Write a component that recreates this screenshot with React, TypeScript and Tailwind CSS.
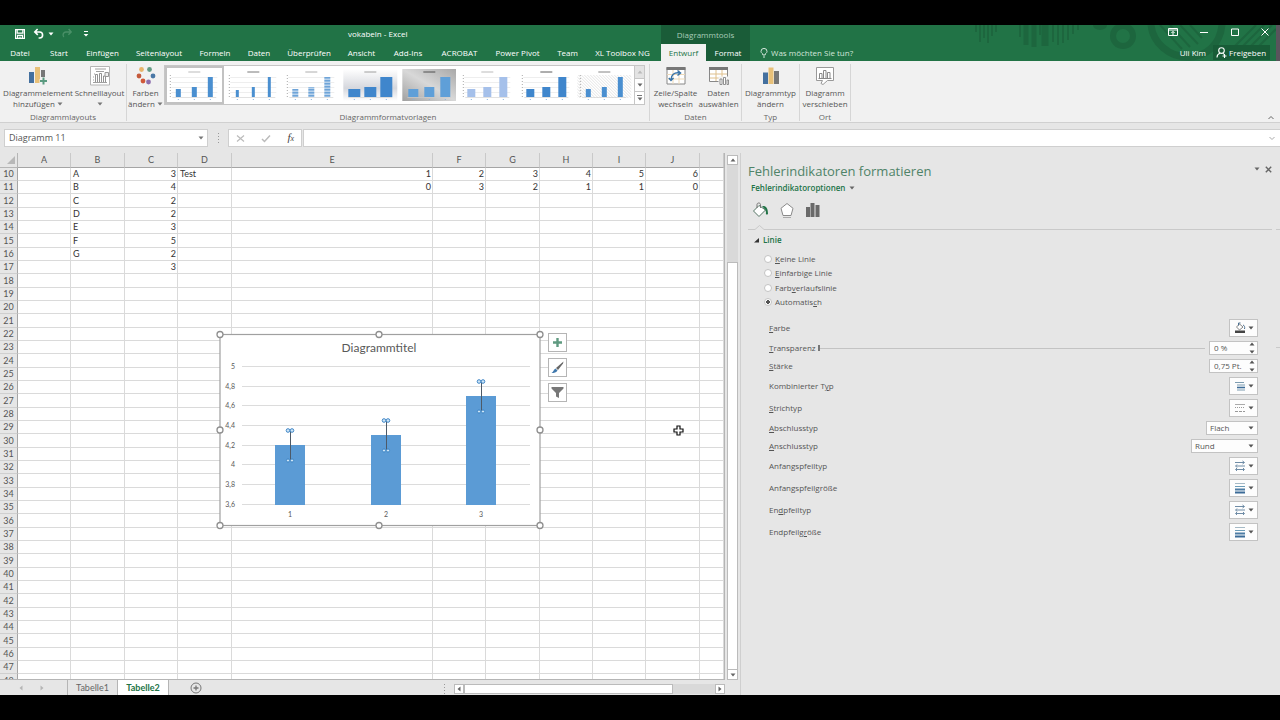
import React from "react";
import clsx from "clsx";

const TABS = [
  { label: "Datei", width: "w-[40px]" },
  { label: "Start", width: "w-[38px]" },
  { label: "Einfügen", width: "w-[49px]" },
  { label: "Seitenlayout", width: "w-[64px]" },
  { label: "Formeln", width: "w-[48px]" },
  { label: "Daten", width: "w-[40px]" },
  { label: "Überprüfen", width: "w-[60px]" },
  { label: "Ansicht", width: "w-[45px]" },
  { label: "Add-Ins", width: "w-[48px]" },
  { label: "ACROBAT", width: "w-[55px]" },
  { label: "Power Pivot", width: "w-[61px]" },
  { label: "Team", width: "w-[39px]" },
  { label: "XL Toolbox NG", width: "w-[74px]" },
];

const COLUMNS = [
  { name: "A", width: "w-[53px]" },
  { name: "B", width: "w-[54px]" },
  { name: "C", width: "w-[53px]" },
  { name: "D", width: "w-[54px]" },
  { name: "E", width: "w-[201px]" },
  { name: "F", width: "w-[53px]" },
  { name: "G", width: "w-[54px]" },
  { name: "H", width: "w-[53px]" },
  { name: "I", width: "w-[53px]" },
  { name: "J", width: "w-[54px]" },
  { name: "", width: "" },
];

const CELLS: Record<number, (string | number)[]> = {
  10: ["", "A", 3, "Test", 1, 2, 3, 4, 5, 6],
  11: ["", "B", 4, "", 0, 3, 2, 1, 1, 0],
  12: ["", "C", 2],
  13: ["", "D", 2],
  14: ["", "E", 3],
  15: ["", "F", 5],
  16: ["", "G", 2],
  17: ["", "", 3],
};

const ROWS = Array.from({ length: 39 }, (_, i) => i + 10);

type IconProps = { className?: string };

const Caret = ({ className }: IconProps) => (
  <svg viewBox="0 0 6 4" className={clsx("h-[4px] w-[6px] shrink-0 fill-current", className)}>
    <path d="M0.5 0.5h5L3 3.5z" />
  </svg>
);

/* ---------- title bar ---------- */

const TitlePattern = () => (
  <svg viewBox="0 0 310 36" className="absolute top-0 right-0 h-[36px] w-[310px]" fill="none" stroke="#1d663e">
    <path d="M6 0v7M10 0v17M14 0v13M18 0v18M22 0v11M26 0v7M50 0v12M70 0v10" strokeWidth="2" />
    <path d="M56 0v20M64 0v22" strokeWidth="5" />
    <path d="M75 0v21" strokeWidth="7" />
    <path d="M83 0v17M88 0v20M93 0v18M98 0v15M103 0v9M108 0v5" strokeWidth="2" />
    <path d="M123 0a7 5 0 0 0 14 0z" fill="#1d663e" stroke="none" />
    <circle cx="153" cy="11" r="10" strokeWidth="6" />
    <path d="M181 0c2 18 18 32 37 32s32-13 34-32" strokeWidth="7" />
    <path d="M190 0l22 24M200 0l20 22M210 0l18 19M220 0l12 13" strokeWidth="2" />
    <path d="M256 30l30-30M264 30l30-30M272 30l30-30M280 30l26-26" strokeWidth="2" />
  </svg>
);

const TitleBar = () => (
  <header className="relative flex h-[36px] shrink-0 bg-[#217346] text-[8px] text-white">
    <TitlePattern />
    <div className="relative flex min-w-0 flex-1 flex-col">
      <div className="flex h-[18px] items-center">
        <div className="flex w-[92px] items-center gap-[7px] pl-[14px]">
          <button aria-label="Speichern" className="h-[12px] w-[12px]">
            <svg viewBox="0 0 12 12" fill="none" stroke="#fff" strokeWidth="1.2">
              <path d="M1.6 1.6h8.8v8.8H1.6zM3.2 1.6v3.6h5.6V1.6M3.6 10.4V7.4h4.8v3M6 8.6v1.6" />
            </svg>
          </button>
          <button aria-label="Rückgängig" className="flex items-center gap-[3px]">
            <svg viewBox="0 0 12 12" className="h-[12px] w-[12px]" fill="none" stroke="#fff" strokeWidth="1.6">
              <path d="M4.6 1L1.8 4l3 2.8M2 4h4.6a3 3 0 0 1 0 6H5.6" />
            </svg>
            <Caret className="w-[4px]" />
          </button>
          <button aria-label="Wiederholen" className="text-[#4a9068]">
            <svg viewBox="0 0 12 12" className="h-[12px] w-[12px]" fill="none" stroke="currentColor" strokeWidth="1.4">
              <path d="M7.6 1l2.6 3-2.8 2.8M10 4H5.4a3 3 0 0 0-2.6 5" />
            </svg>
          </button>
          <button aria-label="Symbolleiste anpassen" className="ml-[3px] h-[6px] w-[6px]">
            <svg viewBox="0 0 6 6" fill="#fff">
              <path d="M1 0h4v1H1zM0.6 3h4.8L3 5.6z" />
            </svg>
          </button>
        </div>
        <h1 className="flex-1 pl-[256px]">vokabeln - Excel</h1>
      </div>
      <nav className="mt-px flex h-[17px] items-center">
        {TABS.map((tab) => (
          <button key={tab.label} className={clsx("h-full shrink-0 whitespace-nowrap", tab.width, tab.label === "XL Toolbox NG" && "pr-[3px]")}>
            {tab.label}
          </button>
        ))}
      </nav>
    </div>
    <div className="relative w-[89px] shrink-0 bg-[#1a5c38]">
      <div className="flex h-[19px] items-center justify-center text-[#a9cdb9]">Diagrammtools</div>
      <div className="flex h-[17px]">
        <button className="w-[45px] bg-[#f1f1f1] text-[#217346]">Entwurf</button>
        <button className="flex-1">Format</button>
      </div>
    </div>
    <div className="relative flex w-[530px] shrink-0 flex-col">
      <div className="flex h-[14px] items-center justify-end gap-[20px] pr-[10px]">
        <button aria-label="Menüband-Anzeigeoptionen">
          <svg viewBox="0 0 10 8" className="h-[8px] w-[10px]" fill="none" stroke="#fff">
            <path d="M0.5 0.5h9v7h-9zM0.5 2h9M5 7V3.6M3.4 5L5 3.4 6.6 5" />
          </svg>
        </button>
        <button aria-label="Minimieren">
          <svg viewBox="0 0 8 8" className="h-[8px] w-[12px]" fill="none" stroke="#fff">
            <path d="M0 4.5h8" />
          </svg>
        </button>
        <button aria-label="Maximieren">
          <svg viewBox="0 0 8 8" className="h-[8px] w-[10px]" fill="none" stroke="#fff">
            <path d="M0.5 1h7v6.5h-7z" />
          </svg>
        </button>
        <button aria-label="Schließen">
          <svg viewBox="0 0 8 8" className="h-[8px] w-[10px]" fill="none" stroke="#fff">
            <path d="M0.5 0.5l7 7M7.5 0.5l-7 7" />
          </svg>
        </button>
      </div>
      <div className="mt-[5px] flex h-[17px] items-center pl-[10px]">
        <svg viewBox="0 0 8 10" className="h-[10px] w-[8px]" fill="none" stroke="#d3e5da">
          <path d="M2.8 7V6C1.5 5 1 4.4 1 3.4a3 3 0 0 1 6 0C7 4.4 6.5 5 5.2 6v1zM3 9h2" />
        </svg>
        <button className="ml-[3px] text-[#d3e5da]">Was möchten Sie tun?</button>
        <span className="ml-auto mr-[7px]">Uli Kim</span>
        <button className="mr-[10px] flex h-[15px] w-[57px] items-center gap-[2px] bg-[#185c37] pl-[3px]">
          <svg viewBox="0 0 11 11" className="h-[11px] w-[11px]" fill="none" stroke="#fff" strokeWidth="1.1">
            <circle cx="5.5" cy="3.6" r="2.8" />
            <path d="M1 10.5c0-2.5 1.2-3.6 3-4.2M7 6.4l1 .8M8.5 7v4M6.5 9h4" />
          </svg>
          Freigeben
        </button>
      </div>
    </div>
    <div className="absolute top-0 right-0 h-full w-[4px] bg-[#59545c]" />
  </header>
);

/* ---------- ribbon ---------- */

const Group = ({ label, className, children }: { label: string; className?: string; children: React.ReactNode }) => (
  <section className={clsx("flex shrink-0 flex-col border-r border-[#d6d6d6]", className)}>
    <div className="flex h-[48px] shrink-0 justify-center">{children}</div>
    <p className="text-center leading-[9px] text-[#666]">{label}</p>
  </section>
);

const BigButton = ({
  lines,
  caret,
  className,
  children,
}: {
  lines: string[];
  caret?: boolean;
  className?: string;
  children: React.ReactNode;
}) => (
  <button className={clsx("flex shrink-0 flex-col items-center whitespace-nowrap leading-[11px]", className)}>
    <svg viewBox="0 0 20 20" className="mt-[2px] mb-[1px] h-[20px] w-[20px] shrink-0" fill="none">
      {children}
    </svg>
    <span>{lines[0]}</span>
    <span className="flex h-[11px] items-center gap-[2px]">
      {lines[1]}
      {caret && <Caret className="w-[4px] text-[#777]" />}
    </span>
  </button>
);

type Thumb = { bars: string; width: number; back?: string; top: number[]; title: string };

const THUMBS: Thumb[] = [
  { bars: "#4a8fd0", width: 5, top: [21, 19, 9], title: "#aaa" },
  { bars: "#4a8fd0", width: 3, top: [22, 19, 9], title: "#555" },
  { bars: "url(#stripes)", width: 6, top: [21, 19, 9], title: "#999" },
  { bars: "#3f86cc", width: 12, back: "url(#fade)", top: [21, 19, 9], title: "#888" },
  { bars: "#5f9fd8", width: 10, back: "url(#grey)", top: [21, 19, 9], title: "#333" },
  { bars: "#a5c0ea", width: 8, top: [21, 19, 9], title: "#aaa" },
  { bars: "#3f86cc", width: 8, top: [21, 19, 9], title: "#333" },
  { bars: "#4a8fd0", width: 5, back: "url(#hatch)", top: [21, 19, 9], title: "#666" },
];

const StyleThumb = ({ thumb, index }: { thumb: Thumb; index: number }) => (
  <button
    aria-label={`Formatvorlage ${index + 1}`}
    className={clsx("h-full min-w-0 flex-1 border-2", index === 0 ? "border-[#c2c2c2]" : "border-transparent")}
  >
    <svg viewBox="0 0 54 34" className="h-full w-full">
      {thumb.back && <rect x="0" y={index === 7 ? 7 : 1} width="54" height={index === 7 ? 23 : 32} fill={thumb.back} />}
      {!thumb.back && <path d="M4 9.5h46M4 14.5h46M4 19.5h46M4 24.5h46" stroke="#eee" />}
      <path d="M21 4h12" stroke={thumb.title} strokeWidth="0.8" />
      {index !== 3 && index !== 4 && <path d="M3 7v22" stroke="#aaa" strokeDasharray="1 2" />}
      <path d="M5 29.5h44" stroke="#ccc" strokeWidth="0.6" />
      {thumb.top.map((top, i) => (
        <rect key={i} x={11 + i * 16 - thumb.width / 2} y={top} width={thumb.width} height={29 - top} fill={thumb.bars} />
      ))}
      {thumb.top.map((_, i) => (
        <path key={i} d={`M${11 + i * 16} 31v1`} stroke="#8ab4de" />
      ))}
    </svg>
  </button>
);

const Gallery = () => (
  <div className="mt-[1px] flex h-[40px] min-w-0 flex-1 border border-[#c6c6c6] bg-white">
    <svg className="absolute h-0 w-0">
      <defs>
        <linearGradient id="fade" x1="0" y1="0" x2="0" y2="1">
          <stop offset="0" stopColor="#fff" />
          <stop offset="0.6" stopColor="#d5d7dd" />
          <stop offset="1" stopColor="#fff" />
        </linearGradient>
        <linearGradient id="grey" x1="1" y1="0" x2="0" y2="1">
          <stop offset="0" stopColor="#a8a8a8" />
          <stop offset="0.5" stopColor="#d8d8d8" />
          <stop offset="1" stopColor="#a0a0a0" />
        </linearGradient>
        <pattern id="stripes" width="4" height="3" patternUnits="userSpaceOnUse">
          <rect width="4" height="3" fill="#b9d3ec" />
          <rect width="4" height="1.5" fill="#6ea4d8" />
        </pattern>
        <pattern id="hatch" width="3" height="3" patternUnits="userSpaceOnUse">
          <path d="M0 0l3 3" stroke="#d2d2d2" strokeWidth="0.6" />
        </pattern>
      </defs>
    </svg>
    {THUMBS.map((thumb, i) => (
      <StyleThumb key={i} thumb={thumb} index={i} />
    ))}
    <div className="flex w-[10px] flex-col border-l border-[#c6c6c6] text-[#666]">
      <button aria-label="Nach oben" className="flex flex-1 items-center justify-center bg-[#e3e3e3] text-[#bbb]">
        <Caret className="w-[4px] rotate-180" />
      </button>
      <button aria-label="Nach unten" className="flex flex-1 items-center justify-center border-y border-[#c6c6c6]">
        <Caret className="w-[5px]" />
      </button>
      <button aria-label="Weitere" className="flex flex-1 flex-col items-center justify-center gap-px">
        <span className="h-px w-[5px] bg-[#777]" />
        <Caret className="w-[5px]" />
      </button>
    </div>
  </div>
);

const Ribbon = () => (
  <div className="flex h-[62px] shrink-0 border-b border-[#d0d0d0] bg-[#f1f1f1] pt-[3px] pb-px text-[8px] text-[#555]">
    <Group label="Diagrammlayouts" className="w-[127px]">
      <BigButton lines={["Diagrammelement", "hinzufügen"]} caret className="w-[73px]">
        <path d="M1 6h5v11H1z" fill="#44709f" />
        <path d="M7 1h5v16H7z" fill="#e8c078" />
        <path d="M13 4h4v7h-4z" fill="#777" />
        <path d="M15.5 11v8M11.5 15h8" stroke="#f1f1f1" strokeWidth="4" />
        <path d="M15.5 11.5v7M12 15h7" stroke="#5a9a80" strokeWidth="2" />
      </BigButton>
      <BigButton lines={["Schnelllayout", ""]} caret className="w-[50px]">
        <path d="M0.5 0.5h19v18.5h-19z" fill="#fff" stroke="#b5b5b5" />
        <path d="M5 3h11M6 5.5h8M4 8h1M3 11h1M3 14h1M3 16.5h14" stroke="#888" strokeWidth="0.8" />
        <path d="M5.5 16V8.5h2V16M9.5 16V7.5h2V16M13.5 16V10h2v6" stroke="#777" strokeWidth="0.8" />
        <path d="M15 6.5h3.5v4H15z" stroke="#999" fill="#eee" />
      </BigButton>
    </Group>
    <section className="flex min-w-0 flex-1 flex-col border-r border-[#d6d6d6]">
      <div className="flex h-[48px] shrink-0 pr-[4px]">
        <BigButton lines={["Farben", "ändern"]} caret className="w-[37px]">
          <circle cx="5.500" cy="3.5" r="2.4" fill="#e8b46a" />
          <circle cx="13.5" cy="3.5" r="2.4" fill="#629a83" />
          <circle cx="3" cy="10" r="2.4" fill="#c55a3c" />
          <circle cx="17" cy="10" r="2.4" fill="#4a78a6" />
          <circle cx="7" cy="15" r="2.4" fill="#d0593a" />
          <circle cx="12.5" cy="16" r="2.4" fill="#8d6fae" />
        </BigButton>
        <Gallery />
      </div>
      <p className="text-center leading-[9px] text-[#666]">Diagrammformatvorlagen</p>
    </section>
    <Group label="Daten" className="w-[92px]">
      <BigButton lines={["Zeile/Spalte", "wechseln"]} className="w-[46px]">
        <path d="M1 1.5h18v16.5H1z" fill="#fff" stroke="#888" />
        <path d="M0.5 1h19v3h-19z" fill="#777" />
        <path d="M1 8.5h18M1 13h18M7 4v14M13 4v14" stroke="#ecd9b8" />
        <path d="M5 14c0-5 3-8 9-7M11.5 4.5L14.5 7l-3 2.5M2.8 12L5 14.5 7.5 12" stroke="#3873a8" strokeWidth="1.5" />
      </BigButton>
      <BigButton lines={["Daten", "auswählen"]} className="w-[40px]">
        <path d="M0.5 1.5h18v14h-18z" fill="#fff" stroke="#888" />
        <path d="M0 1h19v3H0z" fill="#777" />
        <path d="M1 8h17M1 12h17M7 4v11M13 4v11" stroke="#dfc08c" />
        <path d="M9.5 10.5h10v9h-10z" fill="#f1f1f1" />
        <path d="M11 18.5V13h2v5.5zM14.5 18.5v-7h2v7zM18 18.5V14h1.5v4.5z" fill="#fff" stroke="#777" strokeWidth="0.8" />
      </BigButton>
    </Group>
    <Group label="Typ" className="w-[58px]">
      <BigButton lines={["Diagrammtyp", "ändern"]}>
        <path d="M2 6.5h5V18H2z" fill="#44709f" />
        <path d="M7.5 1.5h5V18h-5z" fill="#e8c078" />
        <path d="M13 5h5v13h-5z" fill="#777" />
      </BigButton>
    </Group>
    <Group label="Ort" className="w-[51px]">
      <BigButton lines={["Diagramm", "verschieben"]}>
        <path d="M1.5 1.5h17v13h-6L8 18.5l-2-1 1.5-3h-6z" fill="#fff" stroke="#999" />
        <path d="M4.5 12V7.5H7V12M8.5 12V4.5H11V12M12.5 12V6.5H15V12M3.5 12.5h13" stroke="#888" />
      </BigButton>
    </Group>
    <div className="flex w-[429px] shrink-0 items-end justify-end pr-[6px]">
      <button aria-label="Menüband reduzieren" className="flex h-[7px] items-center">
        <svg viewBox="0 0 6 5" className="h-[5px] w-[6px]" fill="none" stroke="#666">
          <path d="M0.5 4L3 1.5 5.5 4" />
        </svg>
      </button>
    </div>
  </div>
);

const Dots = () => (
  <span className="flex flex-col gap-[2px]">
    <span className="h-px w-px bg-[#999]" />
    <span className="h-px w-px bg-[#999]" />
    <span className="h-px w-px bg-[#999]" />
    <span className="h-px w-px bg-[#999]" />
  </span>
);

const FormulaBar = () => (
  <div className="flex h-[30px] shrink-0 items-center bg-[#e6e6e6] pl-[4px]">
    <div className="flex h-[18px] w-[204px] items-center border border-[#cfcfcf] bg-white pr-[3px]">
      <input aria-label="Namenfeld" defaultValue="Diagramm 11" className="min-w-0 flex-1 px-[4px] text-[9px] text-[#555] outline-none" />
      <button aria-label="Namen anzeigen" className="text-[#777]">
        <Caret />
      </button>
    </div>
    <div className="flex w-[20px] justify-center">
      <Dots />
    </div>
    <div className="flex h-[18px] w-[74px] items-center justify-between border border-[#cfcfcf] bg-white px-[7px]">
      <button aria-label="Abbrechen">
        <svg viewBox="0 0 9 9" className="h-[9px] w-[9px]" fill="none" stroke="#bbb" strokeWidth="1.2">
          <path d="M1 1.5l7 6M8 1.5l-7 6" />
        </svg>
      </button>
      <button aria-label="Eingeben">
        <svg viewBox="0 0 10 9" className="h-[9px] w-[10px]" fill="none" stroke="#bbb" strokeWidth="1.5">
          <path d="M1 5l2.500 2.500L9 1.500" />
        </svg>
      </button>
      <button aria-label="Funktion einfügen" className="font-['Liberation_Serif',serif] text-[11px] leading-[12px] italic text-[#444]">
        f<span className="text-[8px]">x</span>
      </button>
    </div>
    <div className="ml-[1px] flex h-[18px] flex-1 items-center border border-r-0 border-[#cfcfcf] bg-white pr-[5px]">
      <input aria-label="Bearbeitungsleiste" className="h-full flex-1 px-[4px] text-[9px] outline-none" />
      <svg viewBox="0 0 6 5" className="h-[5px] w-[6px]" fill="none" stroke="#aaa">
        <path d="M0.5 1L3 3.5 5.5 1" />
      </svg>
    </div>
  </div>
);

/* ---------- worksheet ---------- */

const Sheet = () => (
  <table className="w-full table-fixed border-separate border-spacing-0 font-[Lato,sans-serif] text-[9px] leading-[12px] text-[#333]">
    <colgroup>
      <col className="w-[18px]" />
      {COLUMNS.map((col, i) => (
        <col key={i} className={col.width} />
      ))}
    </colgroup>
    <thead>
      <tr className="h-[15px] bg-[#e6e6e6] text-[#555]">
        <th className="border-r border-b border-[#b5b5b5] p-0">
          <svg viewBox="0 0 8 8" className="mr-[2px] ml-auto h-[8px] w-[8px]" fill="#b8b8b8">
            <path d="M8 0v8H0z" />
          </svg>
        </th>
        {COLUMNS.map((col, i) => (
          <th key={i} className="border-r border-b border-r-[#c9c9c9] border-b-[#a5a5a5] p-0 font-normal">
            {col.name}
          </th>
        ))}
      </tr>
    </thead>
    <tbody>
      {ROWS.map((row) => (
        <tr key={row} className={row % 3 === 0 ? "h-[14px]" : "h-[13px]"}>
          <th className="border-r border-b border-r-[#a5a5a5] border-b-[#cfcfcf] bg-[#e6e6e6] p-0 font-normal text-[#555]">{row}</th>
          {COLUMNS.map((_, i) => {
            const value = CELLS[row]?.[i] ?? "";
            return (
              <td
                key={i}
                className={clsx("border-r border-b border-[#dadada] p-0 pr-px pl-[2px]", typeof value === "number" && "text-right")}
              >
                {value}
              </td>
            );
          })}
        </tr>
      ))}
    </tbody>
  </table>
);

const SCALE = ["5", "4,8", "4,6", "4,4", "4,2", "4", "3,8", "3,6"];
const GRID_Y = [38, 58, 77, 97, 117, 136, 156, 176];
const BARS = [
  { name: "1", x: 76, top: 117, high: 102, low: 132 },
  { name: "2", x: 172, top: 107, high: 92, low: 122 },
  { name: "3", x: 267, top: 68, high: 53, low: 83 },
];

const Chart = () => (
  <svg viewBox="0 0 332 204" className="h-[204px] w-[332px] font-[Lato,sans-serif]">
    <rect x="6" y="6.5" width="320" height="191" fill="#fff" stroke="#a0a0a0" strokeWidth="1.2" />
    <text x="165" y="24" textAnchor="middle" fontSize="12" fill="#595959">
      Diagrammtitel
    </text>
    {GRID_Y.map((y, i) => (
      <g key={y}>
        <path d={`M28 ${y + 0.5}h288`} stroke="#dcdcdc" />
        <text x="21" y={y + 3} textAnchor="end" fontSize="7" fill="#595959">
          {SCALE[i]}
        </text>
      </g>
    ))}
    {BARS.map((bar) => (
      <g key={bar.name}>
        <rect x={bar.x - 15} y={bar.top} width="30" height={177 - bar.top} fill="#5b9bd5" />
        <path d={`M${bar.x + 0.5} ${bar.high}v30`} stroke="#4d5a68" />
        {[-2, 2].map((dx) => (
          <g key={dx} fill="#cfe6f7" stroke="#3f86c6">
            <circle cx={bar.x + dx} cy={bar.high + 0.5} r="1.8" />
            <circle cx={bar.x + dx} cy={bar.low + 0.5} r="1.6" />
          </g>
        ))}
        <text x={bar.x} y="189" textAnchor="middle" fontSize="7" fill="#595959">
          {bar.name}
        </text>
      </g>
    ))}
    {[6, 165, 326].map((x) =>
      [6.5, 102, 197.5].map(
        (y) => !(x === 165 && y === 102) && <circle key={`${x}-${y}`} cx={x} cy={y} r="3" fill="#fff" stroke="#8f8f8f" strokeWidth="1.3" />
      )
    )}
  </svg>
);

const ChartButton = ({ label, children }: { label: string; children: React.ReactNode }) => (
  <button aria-label={label} className="flex h-[19px] w-[19px] items-center justify-center border border-[#b5b5b5] bg-white">
    <svg viewBox="0 0 13 13" className="h-[13px] w-[13px]" fill="none">
      {children}
    </svg>
  </button>
);

const Worksheet = () => (
  <div className="relative flex min-h-0 flex-1 bg-[#e6e6e6]">
    <div className="min-w-0 flex-1 overflow-hidden border-r border-b border-[#b5b5b5] bg-white">
      <Sheet />
    </div>
    <div className="mr-[2px] ml-[2px] flex w-[11px] flex-col pt-[2px]">
      <button aria-label="Nach oben blättern" className="flex h-[10px] items-center justify-center border border-[#bbb] bg-white text-[#666]">
        <Caret className="rotate-180" />
      </button>
      <div className="h-[97px] bg-[#d9d9d9]" />
      <div className="flex-1 border border-[#bbb] bg-white" />
      <button aria-label="Nach unten blättern" className="flex h-[10px] items-center justify-center border border-t-0 border-[#bbb] bg-white text-[#666]">
        <Caret />
      </button>
    </div>
    <div className="absolute top-[175px] left-[214px] flex gap-[2px]">
      <Chart />
      <div className="flex flex-col gap-[6px] pt-[5px]">
        <ChartButton label="Diagrammelemente">
          <path d="M6.5 2v9M2 6.5h9" stroke="#5f9a80" strokeWidth="2.4" />
        </ChartButton>
        <ChartButton label="Diagrammformatvorlagen">
          <path d="M12.5 0.5L5 7l2 2 5-6.5z" fill="#666" />
          <path d="M4.5 7.5l2 2c-1 2-3.5 2.5-6 2.5 2-1.200 2-3.500 4-4.500z" fill="#3f78ad" />
        </ChartButton>
        <ChartButton label="Diagrammfilter">
          <path d="M0.5 1h12v1.5L8 7v5l-3-1.5V7L0.5 2.5z" fill="#777" />
        </ChartButton>
      </div>
    </div>
    {/* cell cursor */}
    <svg viewBox="0 0 11 11" className="absolute top-[272px] left-[673px] h-[11px] w-[11px]">
      <path d="M4 1h3v3h3v3H7v3H4V7H1V4h3z" fill="#fff" stroke="#111" strokeWidth="1.2" />
    </svg>
  </div>
);

const SheetTabs = () => (
  <div className="flex h-[15px] shrink-0 items-stretch bg-[#e6e6e6] font-[Lato,sans-serif] text-[9px] text-[#666]">
    <div className="flex w-[67px] items-center gap-[15px] pl-[18px] text-[#b5b5b5]">
      <button aria-label="Vorheriges Blatt">
        <Caret className="w-[4px] rotate-90" />
      </button>
      <button aria-label="Nächstes Blatt">
        <Caret className="w-[4px] -rotate-90" />
      </button>
    </div>
    <button className="w-[51px] border-x border-[#b5b5b5]">Tabelle1</button>
    <button className="w-[51px] border-r border-[#b5b5b5] bg-white font-bold text-[#217346]">Tabelle2</button>
    <button aria-label="Neues Blatt" className="ml-[21px]">
      <svg viewBox="0 0 12 12" className="h-[12px] w-[12px]" fill="none" stroke="#777">
        <circle cx="6" cy="6" r="5" />
        <path d="M6 3.5v5M3.5 6h5" strokeWidth="1.3" />
      </svg>
    </button>
    <div className="mr-[15px] ml-auto flex items-end pb-px">
      <Dots />
      <div className="ml-[9px] flex h-[10px] w-[271px] bg-[#d9d9d9]">
        <button aria-label="Nach links blättern" className="flex w-[10px] items-center justify-center border border-[#bbb] bg-white">
          <Caret className="rotate-90" />
        </button>
        <div className="w-[209px] border border-[#bbb] bg-white" />
        <button aria-label="Nach rechts blättern" className="ml-auto flex w-[10px] items-center justify-center border border-[#bbb] bg-white">
          <Caret className="-rotate-90" />
        </button>
      </div>
    </div>
  </div>
);

/* ---------- format pane ---------- */

const RADIOS = [
  { pre: "", key: "K", post: "eine Linie" },
  { pre: "", key: "E", post: "infarbige Linie" },
  { pre: "Farb", key: "v", post: "erlaufslinie" },
  { pre: "Automatis", key: "c", post: "h" },
];

const Row = ({ pre = "", hot, post, id, children }: { pre?: string; hot: string; post: string; id: string; children: React.ReactNode }) => (
  <div className="flex items-center justify-between">
    <label htmlFor={id}>
      {pre}
      <u>{hot}</u>
      {post}
    </label>
    {children}
  </div>
);

const PickButton = ({ id, children }: { id: string; children: React.ReactNode }) => (
  <button id={id} className="flex h-[18px] w-[29px] items-center justify-between border border-[#c3c3c3] bg-[#fdfdfd] pr-[3px] pl-[4px] text-[#555]">
    <svg viewBox="0 0 12 12" className="h-[12px] w-[12px]" fill="none">
      {children}
    </svg>
    <Caret className="w-[5px]" />
  </button>
);

const Spin = ({ id, label, value }: { id: string; label?: string; value: string }) => (
  <div className="flex h-[14px] w-[49px] items-center border border-[#c3c3c3] bg-[#fdfdfd] pr-[2px]">
    <input id={id} aria-label={label} defaultValue={value} className="min-w-0 flex-1 pl-[4px] text-[8px] leading-[12px] outline-none" />
    <div className="flex flex-col gap-[4px] text-[#555]">
      <button aria-label="Erhöhen">
        <Caret className="h-[3px] w-[4px] rotate-180" />
      </button>
      <button aria-label="Verringern">
        <Caret className="h-[3px] w-[4px]" />
      </button>
    </div>
  </div>
);

const Pick = ({ id, value, width }: { id: string; value: string; width: string }) => (
  <div className={clsx("relative flex h-[14px] border border-[#c3c3c3] bg-[#fdfdfd]", width)}>
    <select id={id} className="w-full appearance-none pl-[3px] text-[8px] leading-[12px] outline-none">
      <option>{value}</option>
    </select>
    <Caret className="pointer-events-none absolute top-[4px] right-[3px] w-[5px]" />
  </div>
);

const ArrowTypes = () => (
  <path d="M1 2.5h9M8.5 1l2 1.5-2 1.5M2 6h9M3 4.5L1.5 6 3 7.5M2 9.5h8M3 8L1.5 9.5 3 11M9 8l1.5 1.5L9 11" stroke="#5f7f9c" strokeWidth="0.900" />
);

const ArrowSizes = () => (
  <>
    <path d="M1 1.500h10" stroke="#a5bac6" />
    <path d="M1 4.500h10" stroke="#6b9cb8" />
    <path d="M1 7.500h10" stroke="#4d7ca4" strokeWidth="2" />
    <path d="M1 10.500h10" stroke="#3d6c98" strokeWidth="2" />
  </>
);

const FormatPane = () => (
  <aside className="flex w-[540px] shrink-0 border-l border-[#cfcfcf] bg-[#e6e6e6] pt-[9px] text-[8px] text-[#555]">
    <div className="min-w-0 flex-1 pl-[7px]">
      <div className="flex h-[18px] items-center">
        <h2 className="flex-1 text-[13px] leading-[18px] text-[#4f8368]">Fehlerindikatoren formatieren</h2>
        <button aria-label="Aufgabenbereichsoptionen" className="mb-[4px]">
          <Caret className="text-[#666]" />
        </button>
        <button aria-label="Bereich schließen" className="mb-[4px] ml-[5px]">
          <svg viewBox="0 0 7 7" className="h-[7px] w-[7px]" stroke="#666" strokeWidth="1.4">
            <path d="M0.8 0.8l5.4 5.4M6.2 0.8L0.8 6.2" />
          </svg>
        </button>
      </div>
      <button className="mt-[2px] ml-[3px] flex h-[12px] items-center gap-[4px] font-semibold text-[#217346]">
        Fehlerindikatoroptionen
        <Caret className="text-[#666]" />
      </button>
      <div className="mt-[8px] ml-[4px] flex gap-[10px]">
        <button aria-label="Füllung und Linie">
          <svg viewBox="0 0 17 17" className="h-[17px] w-[17px]" fill="none">
            <path d="M7 3.5L1.5 9l5.5 5.5L13.5 8z" fill="#fff" stroke="#557565" />
            <path d="M5 6V2.500c0-2 3.500-2 3.500 0V6" stroke="#777" />
            <path d="M10 4c4-.5 6 2 6 8-1.5 1.5-2.5 0-2-1.5l-.5-2.5z" fill="#217346" />
          </svg>
        </button>
        <button aria-label="Effekte">
          <svg viewBox="0 0 16 17" className="h-[17px] w-[16px]" fill="none" stroke="#8a8a8a">
            <path d="M8 1.500l6 4.800-2 7.200H4L2 6.300z" fill="#fff" />
            <path d="M4 15.500h8" stroke="#aaa" />
          </svg>
        </button>
        <button aria-label="Fehlerindikatoroptionen">
          <svg viewBox="0 0 16 17" className="h-[17px] w-[16px]" fill="#6a6a6a">
            <path d="M1 5h4v10H1zM5.500 1h4v14h-4zM10.500 3h4v12h-4z" />
          </svg>
        </button>
      </div>
      <svg viewBox="0 0 24 6" className="mt-[5px] block h-[6px] w-[24px]" fill="none" stroke="#c9c9c9">
        <path d="M0 5.5h7l4.5-4 4.5 4h8" />
      </svg>
      <div className="-mt-px ml-[24px] h-px bg-[#c9c9c9]" />
      <button className="mt-[4px] ml-[6px] flex h-[12px] items-center gap-[4px] font-semibold text-[#217346]">
        <svg viewBox="0 0 6 6" className="h-[5px] w-[5px]" fill="#333">
          <path d="M6 0v5.5H0z" />
        </svg>
        Linie
      </button>
      <fieldset className="mt-[5px] ml-[16px] flex flex-col">
        {RADIOS.map((radio, i) => (
          <label key={radio.key} className={clsx("flex items-center gap-[3px]", i % 2 ? "h-[14px]" : "h-[15px]")}>
            <input
              type="radio"
              name="linie"
              defaultChecked={i === 3}
              className="h-[8px] w-[8px] appearance-none rounded-full border border-[#c3c3c3] bg-white checked:bg-[radial-gradient(#555_0_2px,#fff_2px)]"
            />
            <span>
              {radio.pre}
              <u>{radio.key}</u>
              {radio.post}
            </span>
          </label>
        ))}
      </fieldset>
      <div className="mt-[10px] mr-[14px] ml-[21px] flex flex-col gap-1">
        <Row hot="F" post="arbe" id="farbe">
          <PickButton id="farbe">
            <path d="M5.5 2L2.5 5l3 3L9 5z" fill="#fff" stroke="#666" strokeWidth="0.800" />
            <path d="M4.5 3.5V1h2M9 3c1.500.5 2 2 1.500 4" stroke="#4b6f8f" />
            <path d="M1 8.500h10v2.500H1z" fill="#444" />
          </PickButton>
        </Row>
        <div className="flex items-center">
          <label htmlFor="transparenz">
            <u>T</u>ransparenz
          </label>
          <input
            id="transparenz"
            type="range"
            defaultValue={0}
            className="mr-[4px] ml-[2px] h-[8px] min-w-0 flex-1 appearance-none bg-transparent bg-[linear-gradient(#c3c3c3,#c3c3c3)] bg-[length:100%_1px] bg-center bg-no-repeat [&::-webkit-slider-thumb]:h-[6px] [&::-webkit-slider-thumb]:w-[2px] [&::-webkit-slider-thumb]:appearance-none [&::-webkit-slider-thumb]:bg-[#777]"
          />
          <Spin id="transparenz-wert" label="Transparenz in Prozent" value="0 %" />
        </div>
        <Row hot="S" post="tärke" id="staerke">
          <Spin id="staerke" value="0,75 Pt." />
        </Row>
        <Row pre="Kombinierter T" hot="y" post="p" id="kombi">
          <PickButton id="kombi">
            <path d="M1 2.5h9M3 5h8" stroke="#7d9cb0" />
            <path d="M3 7.5h8" stroke="#3d6c98" strokeWidth="1.6" />
            <path d="M3 10h8" stroke="#7d9cb0" />
          </PickButton>
        </Row>
        <Row hot="S" post="trichtyp" id="strich">
          <PickButton id="strich">
            <path d="M1 2.5h10" stroke="#aaa" />
            <path d="M1 5.5h10" stroke="#999" strokeDasharray="1 1" />
            <path d="M1 9.5h10" stroke="#999" strokeDasharray="3 1" />
          </PickButton>
        </Row>
        <Row hot="A" post="bschlusstyp" id="abschluss">
          <Pick id="abschluss" value="Flach" width="w-[52px]" />
        </Row>
        <Row hot="A" post="nschlusstyp" id="anschluss">
          <Pick id="anschluss" value="Rund" width="w-[67px]" />
        </Row>
        <Row pre="Anfan" hot="g" post="spfeiltyp" id="anfangstyp">
          <PickButton id="anfangstyp">
            <ArrowTypes />
          </PickButton>
        </Row>
        <Row pre="Anfan" hot="g" post="spfeilgröße" id="anfangsgroesse">
          <PickButton id="anfangsgroesse">
            <ArrowSizes />
          </PickButton>
        </Row>
        <Row pre="En" hot="d" post="pfeiltyp" id="endtyp">
          <PickButton id="endtyp">
            <ArrowTypes />
          </PickButton>
        </Row>
        <Row pre="Endpfeilg" hot="r" post="öße" id="endgroesse">
          <PickButton id="endgroesse">
            <ArrowSizes />
          </PickButton>
        </Row>
      </div>
    </div>
    <div className="flex w-[8px] flex-col items-end">
      <div className="mt-[67px] h-px w-[4px] bg-[#c9c9c9]" />
      <div className="mt-[117px] h-px w-[4px] bg-[#c9c9c9]" />
    </div>
  </aside>
);

export default function App() {
  return (
    <div className="flex h-screen flex-col overflow-hidden bg-black py-[25px] font-['Open_Sans','Noto_Sans',sans-serif]">
      <TitleBar />
      <Ribbon />
      <FormulaBar />
      <main className="flex min-h-0 flex-1">
        <div className="flex min-w-0 flex-1 flex-col">
          <Worksheet />
          <SheetTabs />
        </div>
        <FormatPane />
      </main>
    </div>
  );
}
